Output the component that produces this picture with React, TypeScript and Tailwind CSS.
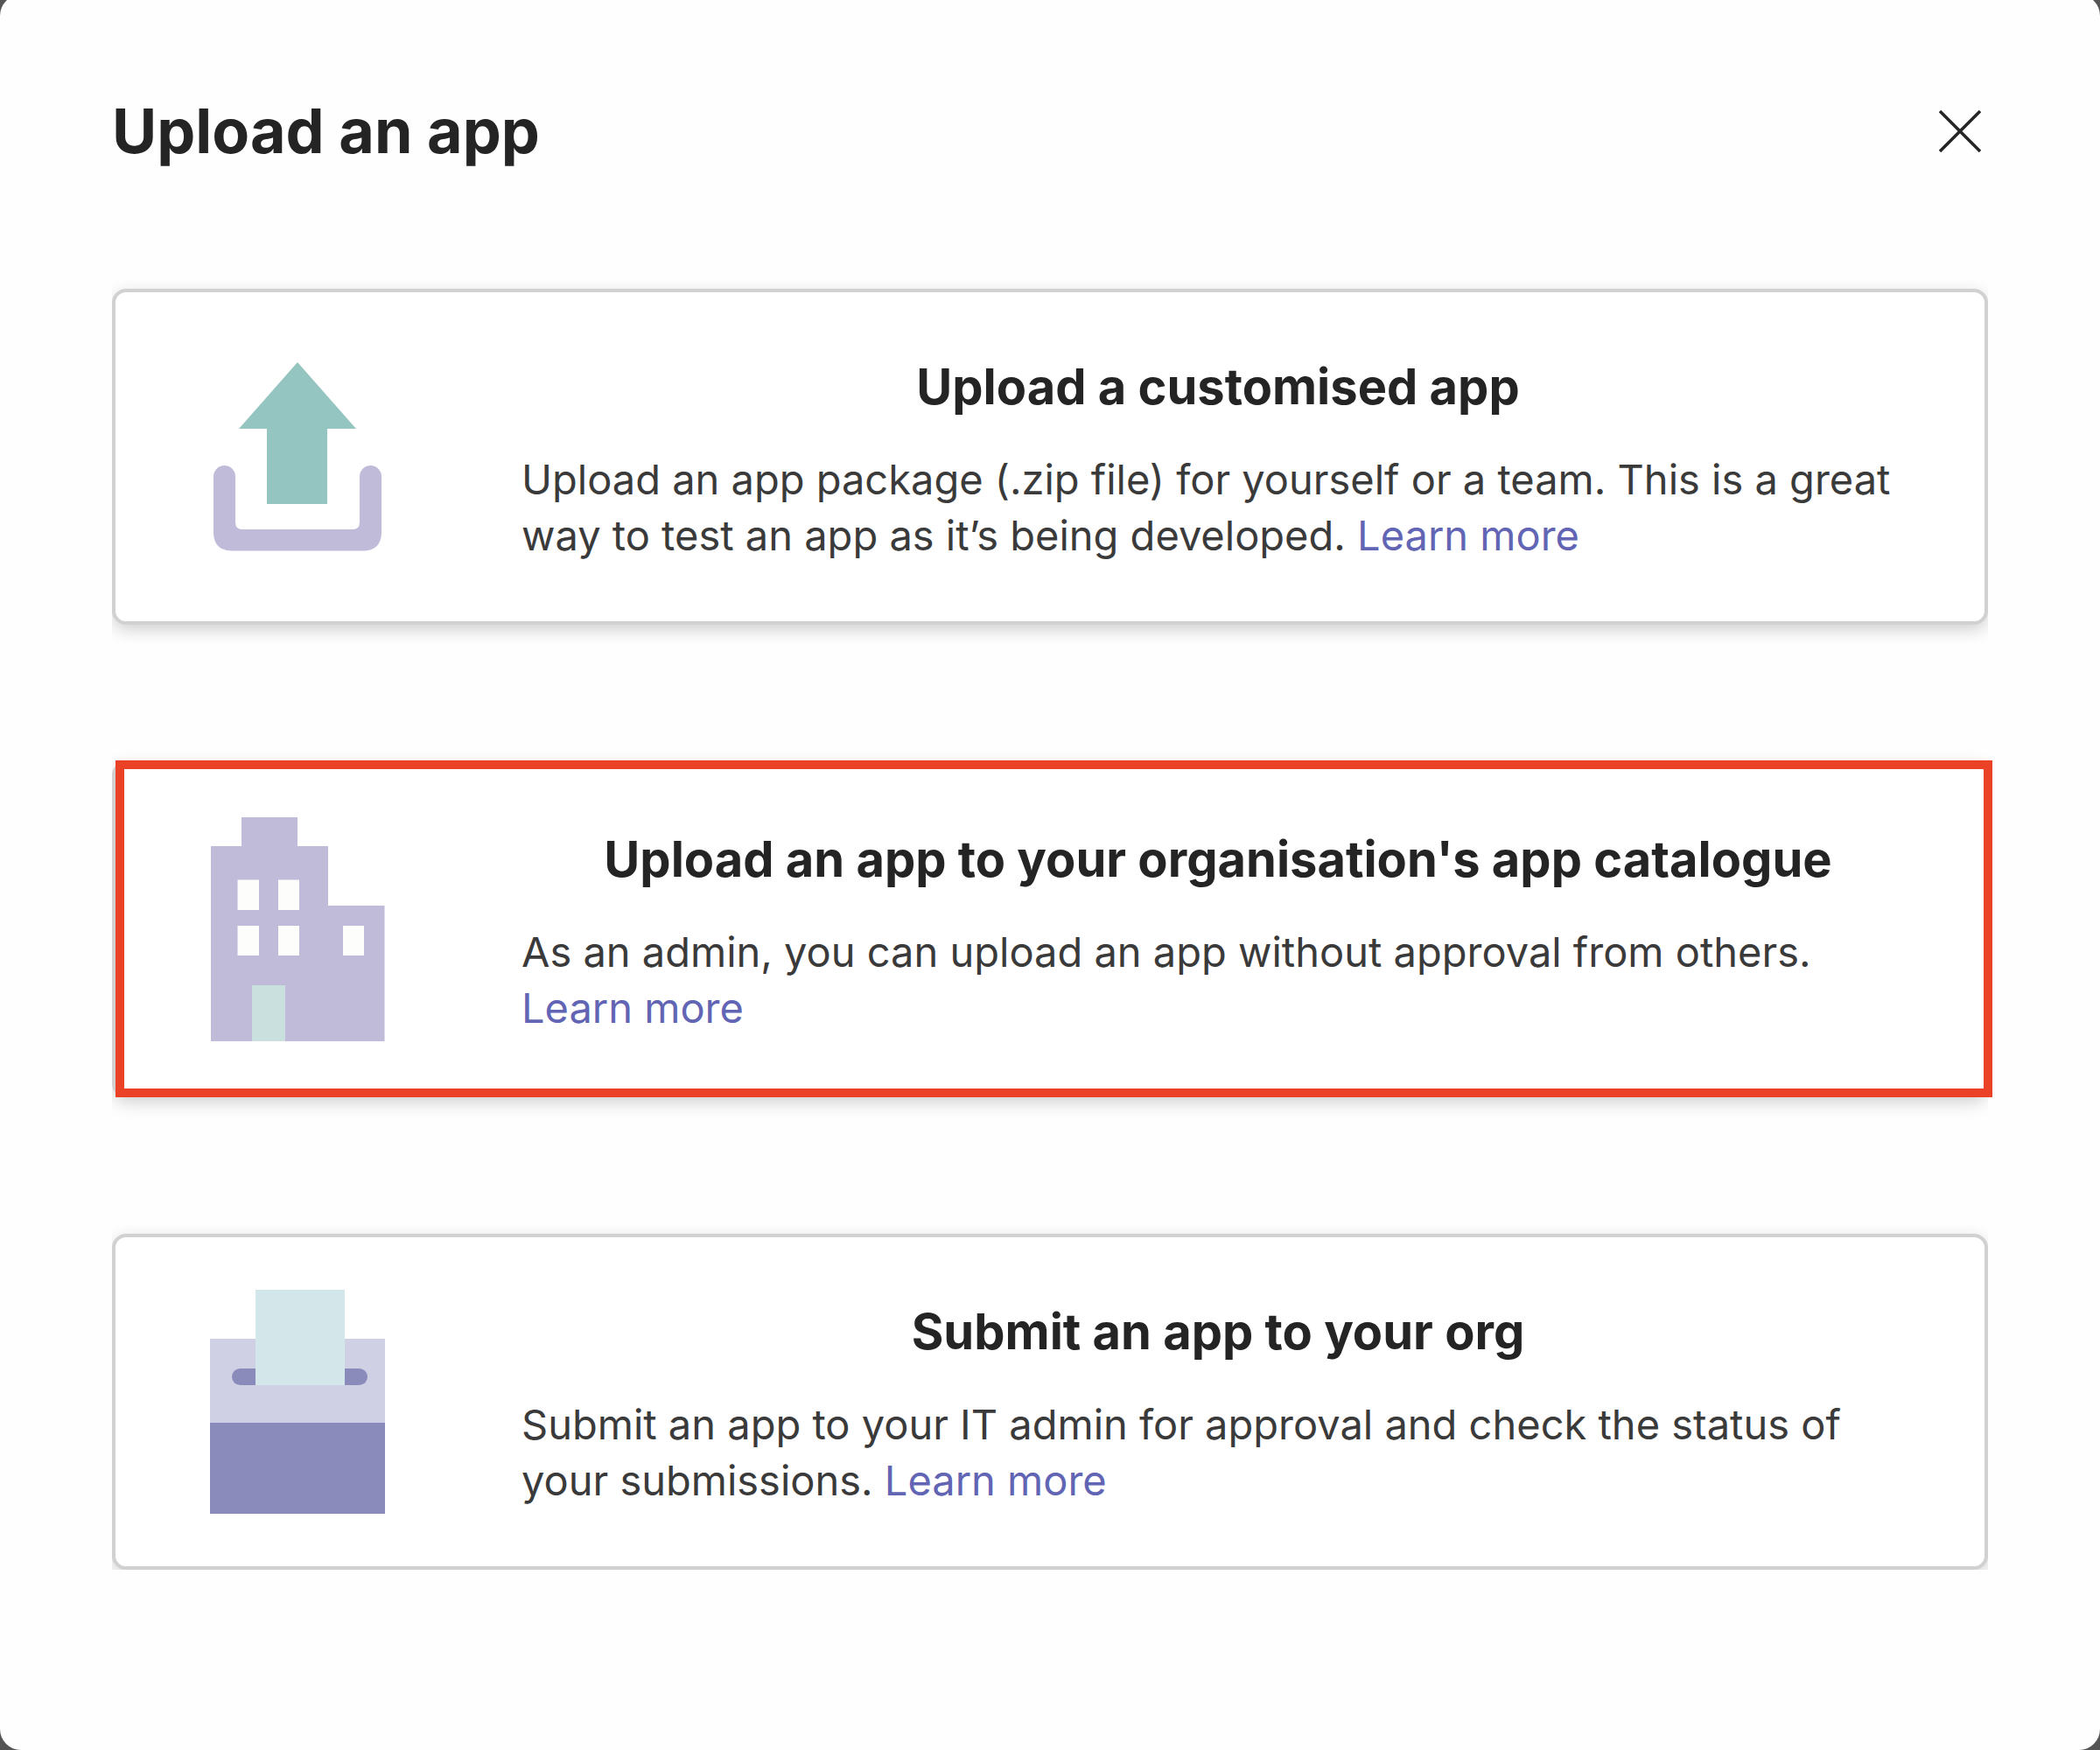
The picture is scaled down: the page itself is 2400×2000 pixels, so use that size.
import type { ReactNode } from "react";

function UploadIcon() {
  return (
    <svg viewBox="0 0 256 256" className="size-64 shrink-0" aria-hidden="true">
      <path d="M128 20 195 96H162V182H93V96H61Z" fill="#95c5c0" />
      <path
        d="M32 150.5a12.5 12.5 0 0 1 25 0V203q0 8 8 8H191q8 0 8-8V150.5a12.5 12.5 0 0 1 25 0V214q0 21.500-21.500 21.500H53.500Q32 235.500 32 214Z"
        fill="#bfbbd9"
      />
    </svg>
  );
}

function BuildingIcon() {
  return (
    <svg viewBox="0 0 256 256" className="size-64 shrink-0" aria-hidden="true">
      <path d="M29 256V33H64V0H128V33H163V101H227.500V256Z" fill="#bfbbd9" />
      <g fill="#fdfefc">
        <rect x="59.500" y="71.500" width="24.500" height="34.500" />
        <rect x="106" y="71.500" width="24" height="34.500" />
        <rect x="59.500" y="124" width="24.500" height="34" />
        <rect x="106" y="124" width="24" height="34" />
        <rect x="180" y="124" width="24" height="34" />
      </g>
      <rect x="76" y="192" width="38" height="64" fill="#cae0de" />
    </svg>
  );
}

function BallotIcon() {
  return (
    <svg viewBox="0 0 256 256" className="size-64 shrink-0" aria-hidden="true">
      <rect x="28" y="56" width="200" height="96" fill="#d0d0e5" />
      <rect x="28" y="152" width="200" height="104" fill="#8b8bbb" />
      <rect x="53" y="90" width="155" height="19" rx="9.500" fill="#8b8bbb" />
      <rect x="80" y="0" width="102" height="109" fill="#d3e6ea" />
    </svg>
  );
}

type Option = {
  title: string;
  text: string;
  icon: ReactNode;
  highlighted?: boolean;
};

const options: Option[] = [
  {
    title: "Upload a customised app",
    text: "Upload an app package (.zip file) for yourself or a team. This is a great way to test an app as it’s being developed.",
    icon: <UploadIcon />,
  },
  {
    title: "Upload an app to your organisation's app catalogue",
    text: "As an admin, you can upload an app without approval from others.",
    icon: <BuildingIcon />,
    highlighted: true,
  },
  {
    title: "Submit an app to your org",
    text: "Submit an app to your IT admin for approval and check the status of your submissions.",
    icon: <BallotIcon />,
  },
];

function OptionCard({ title, text, icon, highlighted }: Option) {
  return (
    <li className="group relative">
      <div className="flex items-start gap-32 rounded-2xl border-4 border-[#d1d1d1] bg-white px-20 py-[60px] shadow-[0_6px_20px_-1px_rgba(0,0,0,0.2)] [clip-path:inset(-32px_0)] group-last:[clip-path:inset(-32px_0_0_0)]">
        {icon}
        <div className="min-w-0 flex-1 pt-3">
          <h2 className="text-center text-[56px] leading-[72px] font-bold text-[#242424]">{title}</h2>
          <p className="mt-[38px] text-[47px] leading-[64px] text-[#3a3a3a]">
            {text}{" "}
            <a href="#learn-more" className="whitespace-nowrap text-[#6264b4]">
              Learn more
            </a>
          </p>
        </div>
      </div>
      {highlighted && (
        <div className="pointer-events-none absolute -top-px -right-[5px] bottom-0 left-1 border-[10px] border-[#ea4127]" />
      )}
    </li>
  );
}

export default function App() {
  return (
    <div className="flex min-h-screen bg-[#555555] font-['Inter','Liberation_Sans',sans-serif]">
      <main
        role="dialog"
        aria-labelledby="dialog-title"
        className="-mt-1.5 flex-1 rounded-3xl bg-[#fefefe] px-32 pt-[106px] pb-32"
      >
        <header className="flex items-center justify-between">
          <h1 id="dialog-title" className="text-[70px] leading-[100px] font-bold text-[#242424]">
            Upload an app
          </h1>
          <button type="button" aria-label="Close" className="size-16 p-2 text-[#242424]">
            <svg viewBox="0 0 48 48" className="size-12" fill="none" stroke="currentColor" strokeWidth="3.500" aria-hidden="true">
              <path d="M1 1 47 47M47 1 1 47" />
            </svg>
          </button>
        </header>
        <ul className="mt-[130px] flex flex-col gap-[156px]">
          {options.map((option) => (
            <OptionCard key={option.title} {...option} />
          ))}
        </ul>
      </main>
    </div>
  );
}
